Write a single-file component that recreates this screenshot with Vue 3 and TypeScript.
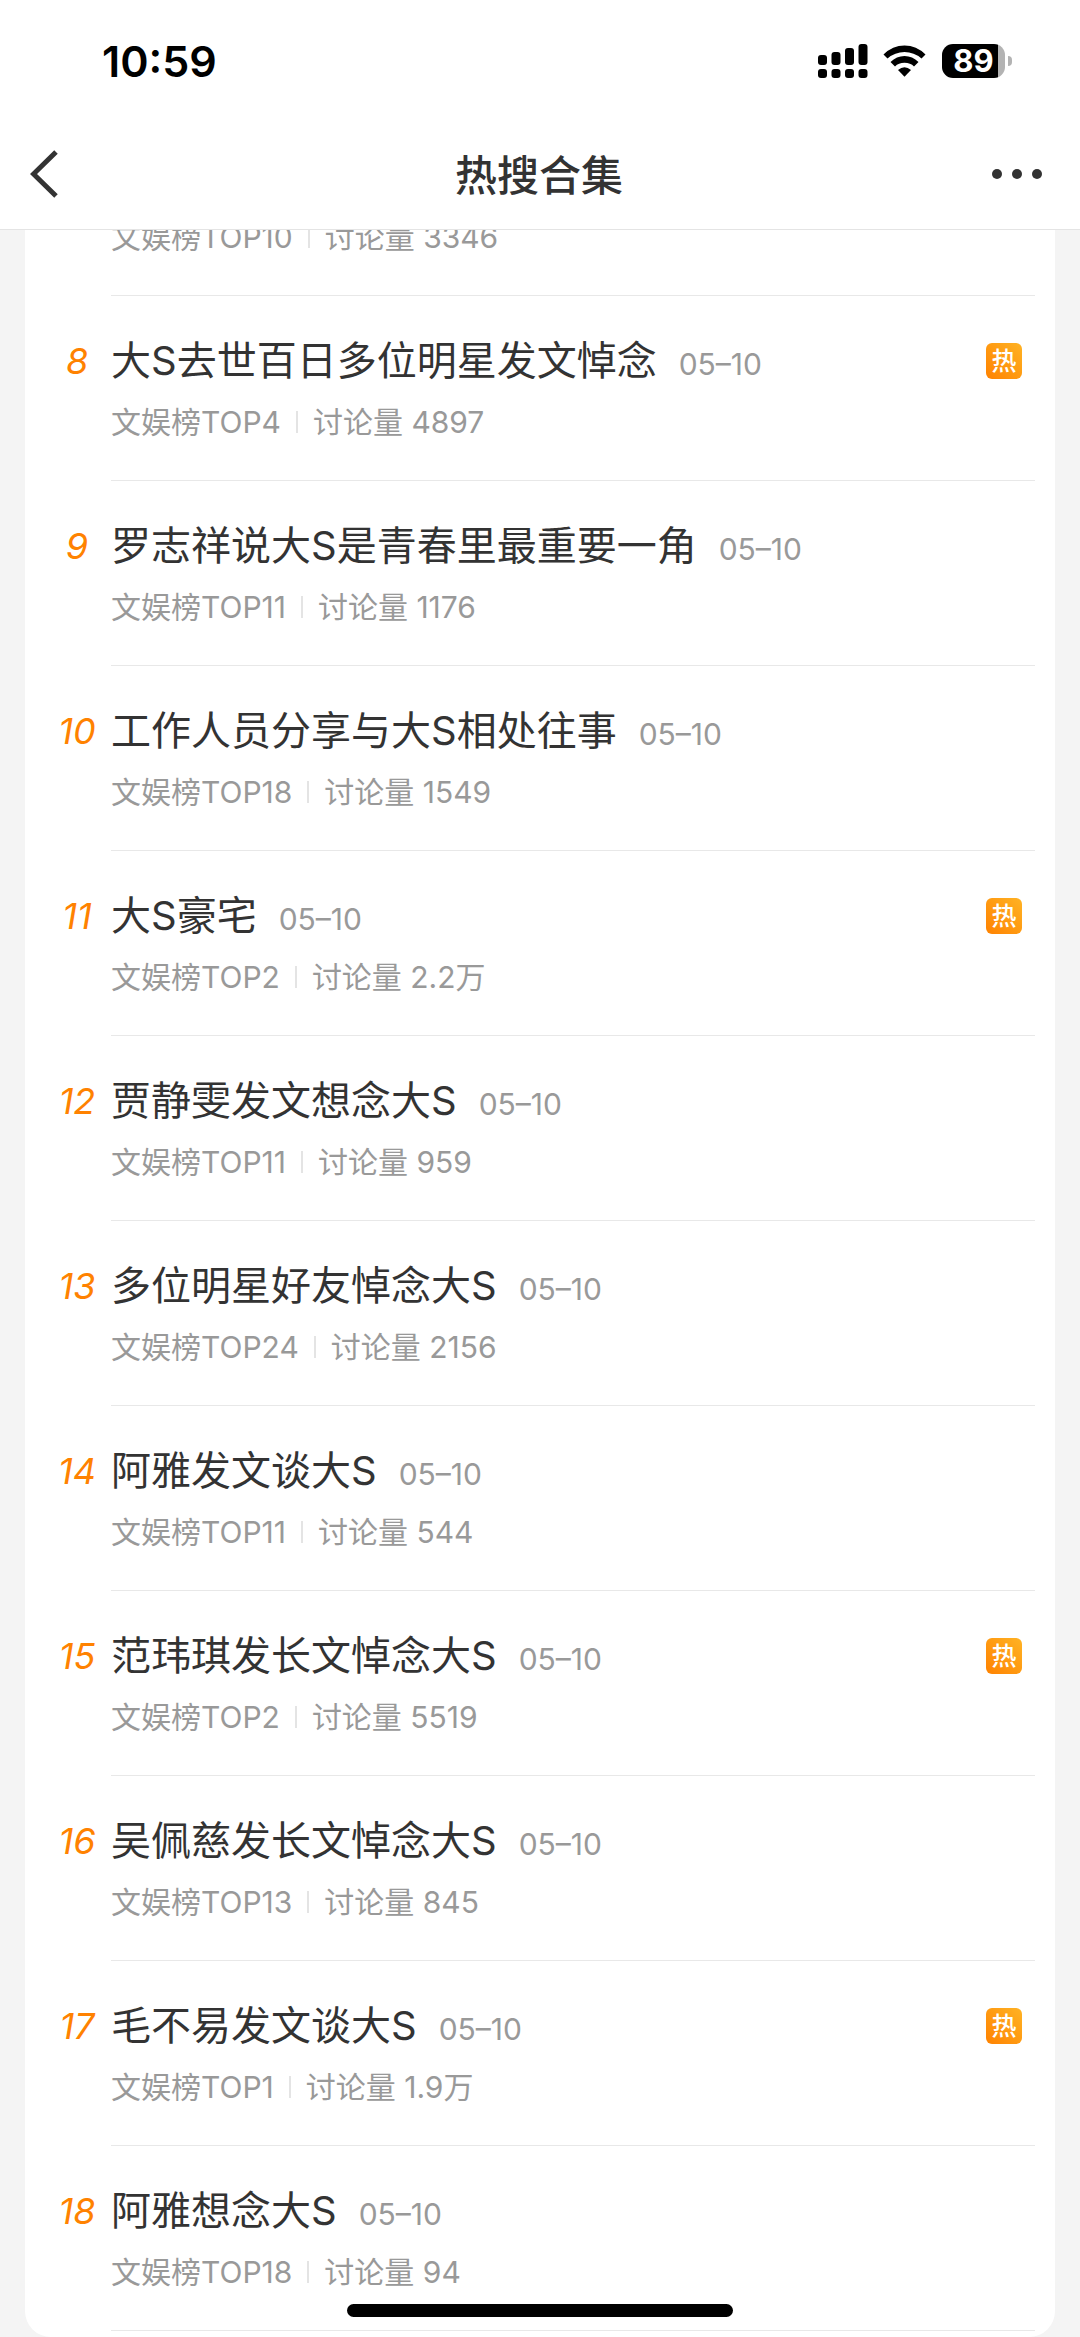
<script setup lang="ts">
interface Topic {
  rank: number
  title: string
  date: string
  top: number
  count: string
  hot?: boolean
}

const topics: Topic[] = [
  { rank: 8, title: '大S去世百日多位明星发文悼念', date: '05–10', top: 4, count: '4897', hot: true },
  { rank: 9, title: '罗志祥说大S是青春里最重要一角', date: '05–10', top: 11, count: '1176' },
  { rank: 10, title: '工作人员分享与大S相处往事', date: '05–10', top: 18, count: '1549' },
  { rank: 11, title: '大S豪宅', date: '05–10', top: 2, count: '2.2万', hot: true },
  { rank: 12, title: '贾静雯发文想念大S', date: '05–10', top: 11, count: '959' },
  { rank: 13, title: '多位明星好友悼念大S', date: '05–10', top: 24, count: '2156' },
  { rank: 14, title: '阿雅发文谈大S', date: '05–10', top: 11, count: '544' },
  { rank: 15, title: '范玮琪发长文悼念大S', date: '05–10', top: 2, count: '5519', hot: true },
  { rank: 16, title: '吴佩慈发长文悼念大S', date: '05–10', top: 13, count: '845' },
  { rank: 17, title: '毛不易发文谈大S', date: '05–10', top: 1, count: '1.9万', hot: true },
  { rank: 18, title: '阿雅想念大S', date: '05–10', top: 18, count: '94' },
]
</script>

<template>
  <div class="page">
    <header class="top">
      <div class="status">
        <span class="time">10:59</span>
        <div class="indicators">
          <svg class="signal" width="50" height="34" viewBox="0 0 50 34" aria-hidden="true">
            <rect x="0" y="11" width="9" height="10" rx="3" />
            <rect x="13.500" y="8" width="9" height="13" rx="3" />
            <rect x="27" y="4" width="9" height="17" rx="3" />
            <rect x="40.500" y="0" width="9" height="21" rx="3" />
            <rect x="0" y="25" width="9" height="9" rx="3" />
            <rect x="13.500" y="25" width="9" height="9" rx="3" />
            <rect x="27" y="25" width="9" height="9" rx="3" />
            <rect x="40.500" y="25" width="9" height="9" rx="3" />
          </svg>
          <svg class="wifi" width="43" height="34" viewBox="0 0 43 34" aria-hidden="true">
            <path d="M0.500 10.500Q9.500 1.500 21.500 1.500T42.500 10.500L38.500 14.500Q31 8 21.500 8T4.500 14.500Z" />
            <path d="M7.500 18Q13.500 12 21.500 12T35.500 18L31 22.500Q27.500 18.800 21.500 18.800T12 22.500Z" />
            <path d="M15 26Q21.500 20.500 28 26L21.500 32.800Z" />
          </svg>
          <div class="battery"><span class="level">89</span><span class="nub"></span></div>
        </div>
      </div>
      <nav class="bar">
        <button class="icon" type="button" aria-label="返回">
          <svg width="28" height="48" viewBox="0 0 28 48"><path d="M26 2L3.500 24L26 46" fill="none" stroke="#333" stroke-width="5" /></svg>
        </button>
        <h1>热搜合集</h1>
        <button class="icon more" type="button" aria-label="更多">
          <svg width="50" height="10" viewBox="0 0 50 10" fill="#333">
            <circle cx="5" cy="5" r="5" /><circle cx="25" cy="5" r="5" /><circle cx="45" cy="5" r="5" />
          </svg>
        </button>
      </nav>
    </header>

    <main class="feed">
      <ul class="card">
        <li class="row partial">
          <div class="body">
            <p class="meta"><span>文娱榜TOP10</span><i class="sep"></i><span>讨论量 3346</span></p>
          </div>
        </li>
        <li v-for="t in topics" :key="t.rank" class="row">
          <span class="rank">{{ t.rank }}</span>
          <div class="body">
            <div class="headline">
              <a class="title" href="#">{{ t.title }}</a>
              <time class="date">{{ t.date }}</time>
              <span v-if="t.hot" class="hot">热</span>
            </div>
            <p class="meta"><span>文娱榜TOP{{ t.top }}</span><i class="sep"></i><span>讨论量 {{ t.count }}</span></p>
          </div>
        </li>
      </ul>
    </main>
    <div class="home"></div>
  </div>
</template>

<style>
body {
  margin: 0;
  background: #f4f4f4;
}
</style>

<style scoped>
.page {
  font-family: Inter, 'Noto Sans CJK SC', sans-serif;
  color: #333;
}
.top {
  position: sticky;
  top: 0;
  z-index: 1;
  background: #fff;
  border-bottom: 1px solid #e4e4e4;
}
.status {
  display: flex;
  justify-content: space-between;
  align-items: center;
  height: 122px;
  padding: 0 68px 0 102px;
  color: #000;
}
.time {
  font-size: 43px;
  font-weight: 600;
}
.indicators {
  display: flex;
  align-items: center;
}
.signal {
  margin-right: 15px;
}
.wifi {
  margin-right: 16px;
}
.battery {
  display: flex;
  align-items: center;
  gap: 3px;
}
.level {
  width: 63px;
  height: 34px;
  border-radius: 11px;
  background: linear-gradient(to right, #000 56px, #b3b3b3 56px);
  color: #fff;
  font-size: 31px;
  font-weight: 700;
  line-height: 34px;
  text-align: center;
}
.nub {
  width: 4px;
  height: 10px;
  border-radius: 0 5px 5px 0;
  background: #b3b3b3;
}
.bar {
  display: flex;
  align-items: center;
  height: 107px;
  padding: 0 38px 0 30px;
}
.icon {
  display: flex;
  width: 56px;
  padding: 0 0 4px;
  border: 0;
  background: none;
}
.more {
  justify-content: flex-end;
  width: 50px;
}
h1 {
  flex: 1;
  margin: 0;
  font-size: 42px;
  font-weight: 500;
  line-height: 60px;
  text-align: center;
}
.feed {
  padding: 0 25px;
}
.card {
  margin: -11px 0 0;
  padding: 0 20px 6px 0;
  border-radius: 0 0 26px 26px;
  background: #fff;
  list-style: none;
}
.row {
  display: flex;
}
.rank {
  width: 68px;
  padding: 41px 0 0 18px;
  color: #ff8200;
  font-size: 36px;
  font-style: italic;
  line-height: 48px;
  text-align: center;
}
.body {
  flex: 1;
  padding: 41px 13px 40px 0;
  border-bottom: 1px solid #e8e8e8;
}
.partial .body {
  margin-left: 86px;
  padding-top: 0;
}
.headline {
  display: flex;
  align-items: baseline;
  height: 48px;
  margin-bottom: 19px;
  line-height: 48px;
}
.title {
  color: #333;
  font-size: 40px;
  text-decoration: none;
}
.date {
  margin-left: 22px;
  color: #999;
  font-size: 30px;
}
.hot {
  align-self: center;
  width: 36px;
  height: 36px;
  margin-left: auto;
  border-radius: 6px;
  background: linear-gradient(to top right, #ff8200, #ffb324);
  color: #fff;
  font-size: 25px;
  font-weight: 500;
  line-height: 36px;
  text-align: center;
}
.meta {
  display: flex;
  align-items: center;
  gap: 15px;
  height: 36px;
  margin: 0;
  color: #999;
  font-size: 30px;
  line-height: 36px;
}
.sep {
  width: 2px;
  height: 22px;
  background: #e4e4e4;
}
.home {
  position: fixed;
  bottom: 20px;
  left: 50%;
  z-index: 2;
  width: 386px;
  height: 13px;
  margin-left: -193px;
  border-radius: 7px;
  background: #000;
}
</style>
